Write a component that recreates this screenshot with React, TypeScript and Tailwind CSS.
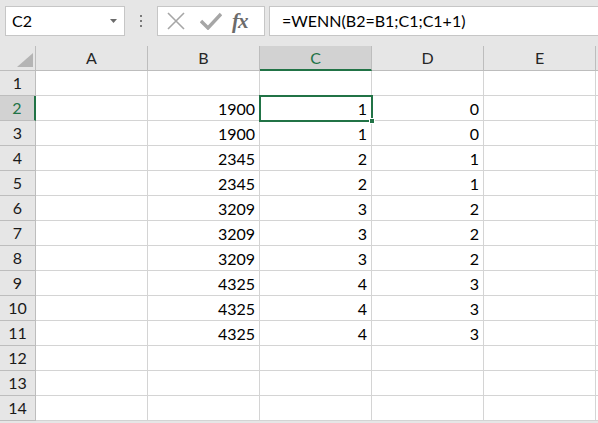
import { useState } from 'react';

const font = "font-['Lato','Noto_Sans',sans-serif]";

const columns = ['A', 'B', 'C', 'D', 'E'];

// rows of sheet: [B, C, D]
const data: Record<number, [string, string, string]> = {
  2: ['1900', '1', '0'],
  3: ['1900', '1', '0'],
  4: ['2345', '2', '1'],
  5: ['2345', '2', '1'],
  6: ['3209', '3', '2'],
  7: ['3209', '3', '2'],
  8: ['3209', '3', '2'],
  9: ['4325', '4', '3'],
  10: ['4325', '4', '3'],
  11: ['4325', '4', '3'],
};

const rows = Array.from({ length: 14 }, (_, i) => i + 1);

function FormulaBar({ formula }: { formula: string }) {
  return (
    <div className="flex h-[46px] items-start pt-[6px] bg-[#e6e6e6]">
      <div className="ml-[5px] w-[120px] h-[30px] bg-white border border-[#c6c6c6] flex items-center justify-between pl-[6px] pr-[7px]">
        <span className="text-[16px] text-black leading-none">C2</span>
        <svg width="7" height="4" viewBox="0 0 7 4">
          <polygon points="0,0 7,0 3.5,4" fill="#6b6b6b" />
        </svg>
      </div>
      <div className="w-[32px] h-[30px] flex flex-col items-center justify-center gap-[3px]">
        <span className="w-[2px] h-[2px] bg-[#7a7a7a]" />
        <span className="w-[2px] h-[2px] bg-[#7a7a7a]" />
        <span className="w-[2px] h-[2px] bg-[#7a7a7a]" />
      </div>
      <div className="w-[108px] h-[30px] bg-white border border-[#c6c6c6] flex items-center pl-[9px]">
        <svg width="18" height="18" viewBox="0 0 18 18" className="mr-[15px]">
          <path d="M1 1 L17 17 M17 1 L1 17" stroke="#a6a6a6" strokeWidth="1.6" fill="none" />
        </svg>
        <svg width="22" height="18" viewBox="0 0 22 18" className="mr-[10px]">
          <path d="M1 9 L8 16 L21 2" stroke="#a6a6a6" strokeWidth="3.4" fill="none" />
        </svg>
        <span className="font-['Liberation_Serif',serif] italic font-bold text-[21px] text-[#6b6b6b] leading-none tracking-[-1px]">
          fx
        </span>
      </div>
      <div className="ml-[4px] flex-1 h-[30px] bg-white border border-r-0 border-[#c6c6c6] flex items-center pl-[12px]">
        <span className="text-[16px] text-black leading-none">{formula}</span>
      </div>
    </div>
  );
}

export default function App() {
  const [selected] = useState({ col: 'C', row: 2 });

  return (
    <div className={`w-[598px] h-[423px] overflow-hidden bg-[#e6e6e6] ${font}`}>
      <FormulaBar formula="=WENN(B2=B1;C1;C1+1)" />

      <div className="grid grid-cols-[36px_112px_112px_112px_112px_112px_1fr] bg-white">
        {/* header row */}
        <div className="h-[25px] bg-[#e6e6e6] border-r border-b border-[#bdbdbd] relative">
          <svg width="36" height="25" viewBox="0 0 36 25" className="absolute inset-0">
            <polygon points="33,7 33,21 17,21" fill="#b4b4b4" />
          </svg>
        </div>
        {columns.map((c) => {
          const active = c === selected.col;
          return (
            <div
              key={c}
              className={
                active
                  ? 'h-[25px] bg-[#d2d2d2] border-r border-[#bdbdbd] border-b-2 border-b-[#217346] flex items-center justify-center text-[16px] text-[#217346] pt-px'
                  : 'h-[25px] bg-[#e6e6e6] border-r border-b border-[#bdbdbd] flex items-center justify-center text-[16px] text-[#262626]'
              }
            >
              {c}
            </div>
          );
        })}
        <div className="h-[25px] bg-[#e6e6e6] border-b border-[#bdbdbd]" />

        {rows.map((r) => {
          const activeRow = r === selected.row;
          const vals = data[r];
          return (
            <div key={r} className="contents">
              <div
                className={
                  activeRow
                    ? 'h-[25px] bg-[#d2d2d2] border-r-2 border-r-[#217346] border-b border-[#bdbdbd] flex items-center justify-center text-[16px] text-[#217346]'
                    : 'h-[25px] bg-[#e6e6e6] border-r border-b border-[#bdbdbd] flex items-center justify-center text-[16px] text-[#1a1a1a]'
                }
              >
                {r}
              </div>
              {columns.map((c) => {
                let v = '';
                if (vals) {
                  if (c === 'B') v = vals[0];
                  if (c === 'C') v = vals[1];
                  if (c === 'D') v = vals[2];
                }
                const isSel = activeRow && c === selected.col;
                return (
                  <div
                    key={c}
                    className="h-[25px] border-r border-b border-[#d4d4d4] flex items-center justify-end pr-[4px] pt-px text-[16px] text-black relative"
                  >
                    {v}
                    {isSel && (
                      <div className="absolute z-10 -left-[1px] -top-[1px] w-[114px] h-[27px] border-2 border-[#217346]">
                        <span className="absolute -right-[4px] -bottom-[4px] w-[6px] h-[6px] bg-[#217346] border border-white" />
                      </div>
                    )}
                  </div>
                );
              })}
              <div className="h-[25px] border-b border-[#d4d4d4]" />
            </div>
          );
        })}
      </div>
    </div>
  );
}
